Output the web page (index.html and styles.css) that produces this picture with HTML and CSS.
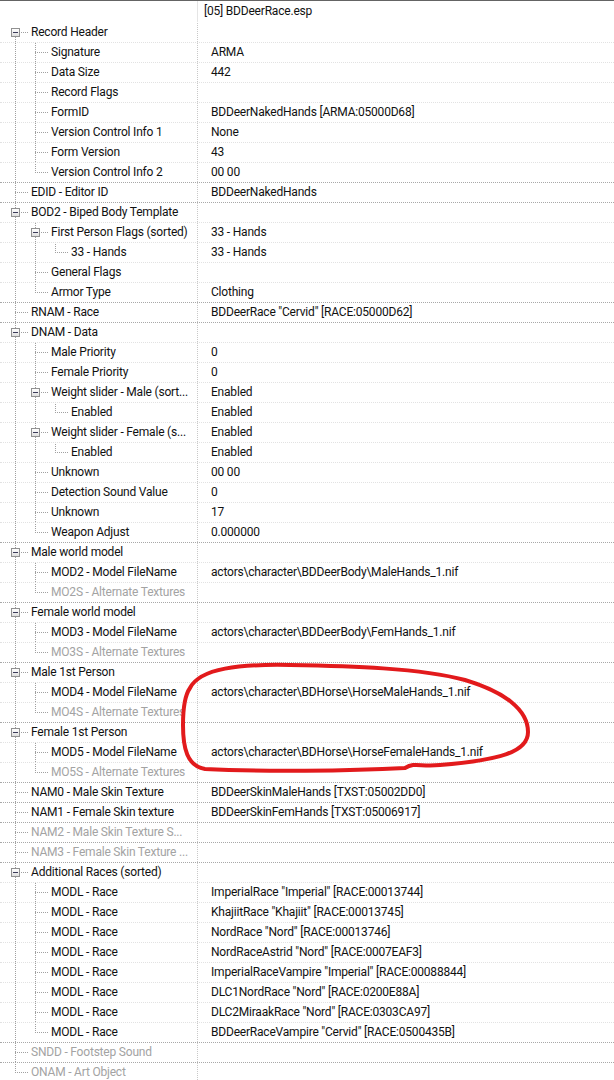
FILE: index.html
```html
<!DOCTYPE html>
<html lang="en">
<head>
  <meta charset="UTF-8">
  <title>BDDeerRace.esp - ARMA</title>
  <link rel="stylesheet" href="styles.css">
</head>
<body>
  <div class="view">
    <!-- Column header -->
    <div class="head">
      <div class="name"></div>
      <div class="value">[05] BDDeerRace.esp</div>
    </div>

    <!-- Record Header -->
    <div class="row first"><div class="name"><i class="c first"><b class="box"></b></i><span>Record Header</span></div><div class="value"></div></div>
    <div class="row"><div class="name"><i class="g"></i><i class="c"></i><span>Signature</span></div><div class="value">ARMA</div></div>
    <div class="row"><div class="name"><i class="g"></i><i class="c"></i><span>Data Size</span></div><div class="value">442</div></div>
    <div class="row"><div class="name"><i class="g"></i><i class="c"></i><span>Record Flags</span></div><div class="value"></div></div>
    <div class="row"><div class="name"><i class="g"></i><i class="c"></i><span>FormID</span></div><div class="value">BDDeerNakedHands [ARMA:05000D68]</div></div>
    <div class="row"><div class="name"><i class="g"></i><i class="c"></i><span>Version Control Info 1</span></div><div class="value">None</div></div>
    <div class="row"><div class="name"><i class="g"></i><i class="c"></i><span>Form Version</span></div><div class="value">43</div></div>
    <div class="row"><div class="name"><i class="g"></i><i class="c end"></i><span>Version Control Info 2</span></div><div class="value">00 00</div></div>

    <div class="row top"><div class="name"><i class="c"></i><span>EDID - Editor ID</span></div><div class="value">BDDeerNakedHands</div></div>

    <!-- BOD2 -->
    <div class="row top"><div class="name"><i class="c"><b class="box"></b></i><span>BOD2 - Biped Body Template</span></div><div class="value"></div></div>
    <div class="row"><div class="name"><i class="g"></i><i class="c"><b class="box"></b></i><span>First Person Flags (sorted)</span></div><div class="value">33 - Hands</div></div>
    <div class="row"><div class="name"><i class="g"></i><i class="g"></i><i class="c end"></i><span>33 - Hands</span></div><div class="value">33 - Hands</div></div>
    <div class="row"><div class="name"><i class="g"></i><i class="c"></i><span>General Flags</span></div><div class="value"></div></div>
    <div class="row"><div class="name"><i class="g"></i><i class="c end"></i><span>Armor Type</span></div><div class="value">Clothing</div></div>

    <div class="row top"><div class="name"><i class="c"></i><span>RNAM - Race</span></div><div class="value">BDDeerRace "Cervid" [RACE:05000D62]</div></div>

    <!-- DNAM -->
    <div class="row top"><div class="name"><i class="c"><b class="box"></b></i><span>DNAM - Data</span></div><div class="value"></div></div>
    <div class="row"><div class="name"><i class="g"></i><i class="c"></i><span>Male Priority</span></div><div class="value">0</div></div>
    <div class="row"><div class="name"><i class="g"></i><i class="c"></i><span>Female Priority</span></div><div class="value">0</div></div>
    <div class="row"><div class="name"><i class="g"></i><i class="c"><b class="box"></b></i><span>Weight slider - Male (sort...</span></div><div class="value">Enabled</div></div>
    <div class="row"><div class="name"><i class="g"></i><i class="g"></i><i class="c end"></i><span>Enabled</span></div><div class="value">Enabled</div></div>
    <div class="row"><div class="name"><i class="g"></i><i class="c"><b class="box"></b></i><span>Weight slider - Female (s...</span></div><div class="value">Enabled</div></div>
    <div class="row"><div class="name"><i class="g"></i><i class="g"></i><i class="c end"></i><span>Enabled</span></div><div class="value">Enabled</div></div>
    <div class="row"><div class="name"><i class="g"></i><i class="c"></i><span>Unknown</span></div><div class="value">00 00</div></div>
    <div class="row"><div class="name"><i class="g"></i><i class="c"></i><span>Detection Sound Value</span></div><div class="value">0</div></div>
    <div class="row"><div class="name"><i class="g"></i><i class="c"></i><span>Unknown</span></div><div class="value">17</div></div>
    <div class="row"><div class="name"><i class="g"></i><i class="c end"></i><span>Weapon Adjust</span></div><div class="value">0.000000</div></div>

    <!-- Models -->
    <div class="row top"><div class="name"><i class="c"><b class="box"></b></i><span>Male world model</span></div><div class="value"></div></div>
    <div class="row"><div class="name"><i class="g"></i><i class="c"></i><span>MOD2 - Model FileName</span></div><div class="value">actors\character\BDDeerBody\MaleHands_1.nif</div></div>
    <div class="row"><div class="name"><i class="g"></i><i class="c end"></i><span class="off">MO2S - Alternate Textures</span></div><div class="value"></div></div>

    <div class="row top"><div class="name"><i class="c"><b class="box"></b></i><span>Female world model</span></div><div class="value"></div></div>
    <div class="row"><div class="name"><i class="g"></i><i class="c"></i><span>MOD3 - Model FileName</span></div><div class="value">actors\character\BDDeerBody\FemHands_1.nif</div></div>
    <div class="row"><div class="name"><i class="g"></i><i class="c end"></i><span class="off">MO3S - Alternate Textures</span></div><div class="value"></div></div>

    <div class="row top"><div class="name"><i class="c"><b class="box"></b></i><span>Male 1st Person</span></div><div class="value"></div></div>
    <div class="row"><div class="name"><i class="g"></i><i class="c"></i><span>MOD4 - Model FileName</span></div><div class="value">actors\character\BDHorse\HorseMaleHands_1.nif</div></div>
    <div class="row"><div class="name"><i class="g"></i><i class="c end"></i><span class="off">MO4S - Alternate Textures</span></div><div class="value"></div></div>

    <div class="row top"><div class="name"><i class="c"><b class="box"></b></i><span>Female 1st Person</span></div><div class="value"></div></div>
    <div class="row"><div class="name"><i class="g"></i><i class="c"></i><span>MOD5 - Model FileName</span></div><div class="value">actors\character\BDHorse\HorseFemaleHands_1.nif</div></div>
    <div class="row"><div class="name"><i class="g"></i><i class="c end"></i><span class="off">MO5S - Alternate Textures</span></div><div class="value"></div></div>

    <!-- Skin textures -->
    <div class="row top"><div class="name"><i class="c"></i><span>NAM0 - Male Skin Texture</span></div><div class="value">BDDeerSkinMaleHands [TXST:05002DD0]</div></div>
    <div class="row top"><div class="name"><i class="c"></i><span>NAM1 - Female Skin texture</span></div><div class="value">BDDeerSkinFemHands [TXST:05006917]</div></div>
    <div class="row top"><div class="name"><i class="c"></i><span class="off">NAM2 - Male Skin Texture S...</span></div><div class="value"></div></div>
    <div class="row top"><div class="name"><i class="c"></i><span class="off">NAM3 - Female Skin Texture ...</span></div><div class="value"></div></div>

    <!-- Additional races -->
    <div class="row top"><div class="name"><i class="c"><b class="box"></b></i><span>Additional Races (sorted)</span></div><div class="value"></div></div>
    <div class="row"><div class="name"><i class="g"></i><i class="c"></i><span>MODL - Race</span></div><div class="value">ImperialRace "Imperial" [RACE:00013744]</div></div>
    <div class="row"><div class="name"><i class="g"></i><i class="c"></i><span>MODL - Race</span></div><div class="value">KhajiitRace "Khajiit" [RACE:00013745]</div></div>
    <div class="row"><div class="name"><i class="g"></i><i class="c"></i><span>MODL - Race</span></div><div class="value">NordRace "Nord" [RACE:00013746]</div></div>
    <div class="row"><div class="name"><i class="g"></i><i class="c"></i><span>MODL - Race</span></div><div class="value">NordRaceAstrid "Nord" [RACE:0007EAF3]</div></div>
    <div class="row"><div class="name"><i class="g"></i><i class="c"></i><span>MODL - Race</span></div><div class="value">ImperialRaceVampire "Imperial" [RACE:00088844]</div></div>
    <div class="row"><div class="name"><i class="g"></i><i class="c"></i><span>MODL - Race</span></div><div class="value">DLC1NordRace "Nord" [RACE:0200E88A]</div></div>
    <div class="row"><div class="name"><i class="g"></i><i class="c"></i><span>MODL - Race</span></div><div class="value">DLC2MiraakRace "Nord" [RACE:0303CA97]</div></div>
    <div class="row"><div class="name"><i class="g"></i><i class="c end"></i><span>MODL - Race</span></div><div class="value">BDDeerRaceVampire "Cervid" [RACE:0500435B]</div></div>

    <div class="row top"><div class="name"><i class="c"></i><span class="off">SNDD - Footstep Sound</span></div><div class="value"></div></div>
    <div class="row top"><div class="name"><i class="c end"></i><span class="off">ONAM - Art Object</span></div><div class="value"></div></div>

    <!-- Hand-drawn annotation -->
    <svg class="scribble" viewBox="0 0 614 1080">
      <path d="M 190,688 C 200,668 240,664 290,665 C 350,666 420,668 465,680 C 505,692 528,710 528,732 C 528,752 500,760 440,765 C 420,767 415,762 405,768 C 350,771 260,772 205,769 C 187,766 183,748 183,725 C 183,705 185,695 190,688"/>
    </svg>
  </div>
</body>
</html>
```

FILE: styles.css
```css
*, *:before,
*:after {
  box-sizing: border-box;
}

html, body {
  margin: 0;
  background: #ffffff;
}

body {
  font: 400 12px "Segoe UI", Roboto, "Liberation Sans", sans-serif;
  letter-spacing: -0.2px;
  color: #111111;
}

.view {
  position: relative;
  width: 614px;
  height: 1080px;
  overflow: hidden;
  border-top: 1px solid #646464;
}

.head {
  display: flex;
  height: 21px;
  line-height: 21px;
}

.head .name {
  width: 197px;
}

.head .value {
  border-left: 1px solid #e5e5e5;
  padding-left: 6px;
}

.row {
  display: flex;
  height: 20px;
  line-height: 19px;
  white-space: nowrap;
  border-top: 1px dotted #e2e2e2;
}

.row.top {
  border-top-color: #a8a8a8;
}

.row.first {
  border-top-color: transparent;
}

.name {
  display: flex;
  flex: none;
  width: 197px;
  padding-left: 5px;
  overflow: hidden;
}

.name span {
  margin-left: 6px;
}

.name .off {
  color: #a3a3a3;
}

.value {
  flex: 1;
  border-left: 1px dotted #c8c8c8;
  padding-left: 13px;
}

/* tree guide lines */
.g,
.c {
  position: relative;
  flex: none;
  width: 20px;
  height: 100%;
  font-style: normal;
}

.g::before,
.c::before {
  content: "";
  position: absolute;
  left: 10px;
  top: -1px;
  bottom: 0;
  border-left: 1px dotted #a0a0a0;
}

.c::after {
  content: "";
  position: absolute;
  left: 10px;
  top: 9px;
  width: 13px;
  border-top: 1px dotted #a0a0a0;
}

.c.end::before {
  bottom: auto;
  height: 11px;
}

.c.first::before {
  top: 9px;
}

/* expander box */
.box {
  position: absolute;
  z-index: 1;
  left: 6px;
  top: 5px;
  width: 9px;
  height: 9px;
  border: 1px solid #919191;
  background: linear-gradient(#ffffff, #dedede);
}

.box::after {
  content: "";
  position: absolute;
  left: 1px;
  top: 3px;
  width: 5px;
  height: 1px;
  background: #3c3c5a;
}

.scribble {
  position: absolute;
  left: 0;
  top: -1px;
  width: 614px;
  height: 1080px;
  pointer-events: none;
  fill: none;
  stroke: #e21a1c;
  stroke-width: 4px;
  stroke-linecap: round;
  stroke-linejoin: round;
}
```
